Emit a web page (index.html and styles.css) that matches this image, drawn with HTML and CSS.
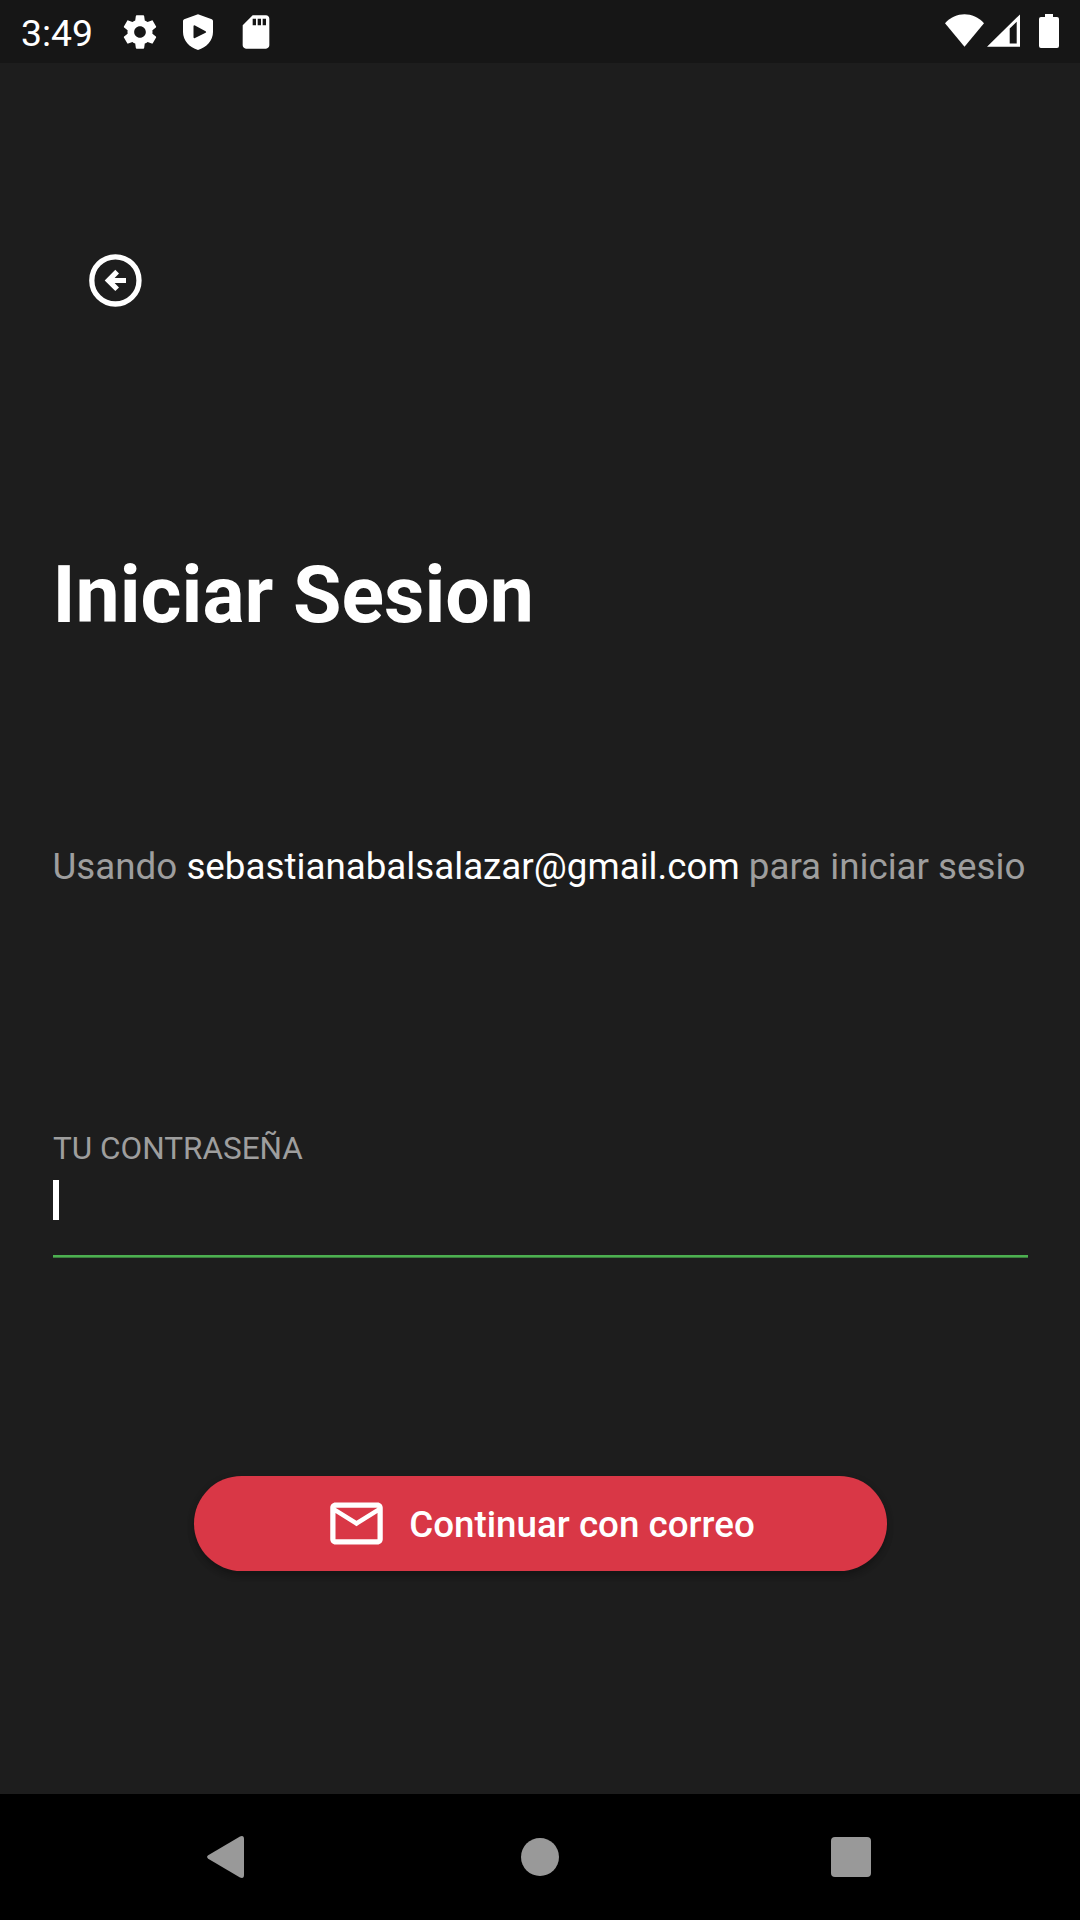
FILE: index.html
```html
<!DOCTYPE html>
<html lang="es">
<head>
<meta charset="utf-8">
<title>Iniciar Sesion</title>
<link rel="stylesheet" href="styles.css">
</head>
<body>
<div class="screen">
  <header class="status-bar">
    <span class="clock">3:49</span>
    <div class="notifications">
      <svg class="notice" viewBox="0 0 24 24"><path d="M19.43 12.98c.04-.32.07-.64.07-.98s-.03-.66-.07-.98l2.11-1.65c.19-.15.24-.42.12-.64l-2-3.46c-.12-.22-.39-.3-.61-.22l-2.49 1c-.52-.4-1.08-.73-1.69-.98l-.38-2.65C14.46 2.18 14.25 2 14 2h-4c-.25 0-.46.18-.49.42l-.38 2.65c-.61.25-1.17.59-1.69.98l-2.49-1c-.23-.09-.49 0-.61.22l-2 3.46c-.13.22-.07.49.12.64l2.11 1.65c-.04.32-.07.65-.07.98s.03.66.07.98l-2.11 1.65c-.19.15-.24.42-.12.64l2 3.46c.12.22.39.3.61.22l2.49-1c.52.4 1.08.73 1.69.98l.38 2.65c.03.24.24.42.49.42h4c.25 0 .46-.18.49-.42l.38-2.65c.61-.25 1.17-.59 1.69-.98l2.49 1c.23.09.49 0 .61-.22l2-3.46c.12-.22.07-.49-.12-.64l-2.11-1.65zM12 15.5c-1.93 0-3.5-1.57-3.5-3.5s1.57-3.5 3.5-3.5 3.5 1.57 3.5 3.5-1.57 3.5-3.5 3.5z"/></svg>
      <svg class="notice" viewBox="0 0 40 40"><path fill-rule="evenodd" d="M20 2.2L33.800 7.200Q35 7.700 35 9V20C35 28.500 28.500 35.500 20 38C11.500 35.500 5 28.500 5 20V9Q5 7.700 6.200 7.200ZM15.500 14.500V25Q15.500 26.800 17 26L27.600 20.700Q28.900 20 27.600 19.200L17 13.400Q15.500 12.800 15.500 14.500Z"/></svg>
      <svg class="notice" viewBox="0 0 24 24"><path d="M18 2h-8L4.020 8 4 20c0 1.100.9 2 2 2h12c1.100 0 2-.9 2-2V4c0-1.100-.9-2-2-2zm-6 6h-2V4h2v4zm3 0h-2V4h2v4zm3 0h-2V4h2v4z"/></svg>
    </div>
    <div class="system">
      <svg width="39" height="34" viewBox="0 0 39 34"><path d="M0 9.200C11 -2.600 28 -2.600 39 9.200L19.500 32.700Z"/></svg>
      <svg class="signal" width="33" height="34" viewBox="0 0 33 34"><path fill-rule="evenodd" d="M0 32.700L33 .4V32.700ZM22.700 14.500V29.500H29.700V7.800Z"/></svg>
      <svg class="battery" width="20" height="34" viewBox="0 0 20 34"><path d="M6 0H14V3H18Q20 3 20 5V32Q20 34 18 34H2Q0 34 0 32V5Q0 3 2 3H6Z"/></svg>
    </div>
  </header>
  <main class="content">
    <button class="back" aria-label="Volver">
      <svg class="icon" viewBox="0 0 63 63"><circle cx="31.400" cy="31.400" r="23.600" fill="none" stroke="#fff" stroke-width="5.300"/><path d="M20.700 31.400L31.300 20.800L35 24.500L30.600 28.900H42V33.900H30.600L35 38.400L31.300 42.100Z"/></svg>
    </button>
    <h1 class="title">Iniciar Sesion</h1>
    <p class="account">Usando <span class="email">sebastianabalsalazar@gmail.com</span> para iniciar sesio</p>
    <div class="field">
      <span class="label">TU CONTRASEÑA</span>
      <div class="entry"><span class="caret"></span></div>
    </div>
    <button class="submit">
      <svg class="icon" viewBox="0 0 24 24"><path d="M22 6c0-1.100-.9-2-2-2H4c-1.100 0-2 .9-2 2v12c0 1.100.9 2 2 2h16c1.100 0 2-.9 2-2V6zm-2 0l-8 4.990L4 6h16zm0 12H4V8l8 5 8-5v10z"/></svg>
      <span class="submit-text">Continuar con correo</span>
    </button>
  </main>
  <nav class="nav-bar">
    <svg width="38" height="42" viewBox="0 0 38 42"><path d="M1.200 19.300L33 .5Q37 -1 37 3V39Q37 43 33 41.500L1.200 22.700Q-1 21 1.200 19.300Z"/></svg>
    <svg class="home" width="38" height="38" viewBox="0 0 38 38"><circle cx="19" cy="19" r="19"/></svg>
    <svg width="40" height="40" viewBox="0 0 40 40"><rect width="40" height="40" rx="4"/></svg>
  </nav>
</div>
</body>
</html>
```
FILE: styles.css
```css
* { box-sizing: border-box; }
body { margin: 0; font-family: Roboto, sans-serif; color: #fff; background: #1d1d1d; }
svg { display: block; fill: #fff; flex: none; }
button { border: 0; font: inherit; color: inherit; }
.screen { width: 1080px; height: 1920px; display: flex; flex-direction: column; overflow: hidden; }

.status-bar { height: 63px; flex: none; display: flex; align-items: center; padding: 0 21px; background: #161616; }
.clock { width: 99px; font-size: 37.4px; line-height: 44px; padding-top: 3px; }
.notifications { display: flex; gap: 18px; }
.notice { width: 40px; height: 40px; }
.system { display: flex; margin: -1px 0 0 auto; }
.signal { margin-left: 3px; }
.battery { margin-left: 19px; }

.content { flex: 1; display: flex; flex-direction: column; align-items: flex-start; padding: 186px 52.5px 0; }
.icon { width: 63px; height: 63px; }
.back { margin-left: 31.5px; padding: 0; background: none; }
.title { margin: 237px 0 0; font-size: 78.75px; line-height: 92px; font-weight: 700; white-space: nowrap; }
.account { margin: 204px 0 0; font-size: 36.75px; line-height: 43px; white-space: nowrap; color: #9e9e9e; }
.email { color: #fff; }
.field { align-self: stretch; margin-top: 242px; border-bottom: 2px solid #4caf50; box-shadow: 0 1px #3a7c3d; }
.label { display: block; padding-left: .5px; font-size: 31.5px; line-height: 37px; color: #9e9e9e; white-space: nowrap; }
.entry { padding: 13px 0 35.5px; }
.caret { display: block; width: 5.25px; height: 39.5px; margin-left: .8px; background: #fff; }
.submit { align-self: center; width: 693px; height: 95px; margin-top: 219px; padding: 0; display: flex; align-items: center; justify-content: center; gap: 21px; border-radius: 48px; background: #d93746; font-size: 36.75px; font-weight: 500; box-shadow: 0 5px 6px rgba(0, 0, 0, .2), 0 2px 8px rgba(0, 0, 0, .1); white-space: nowrap; }
.submit-text { padding-top: 2px; }

.nav-bar { height: 126px; flex: none; display: flex; align-items: center; justify-content: space-between; padding: 0 209px 0 207px; background: #000; }
.nav-bar svg { fill: #999; }
.home { margin-left: 4px; }
```
